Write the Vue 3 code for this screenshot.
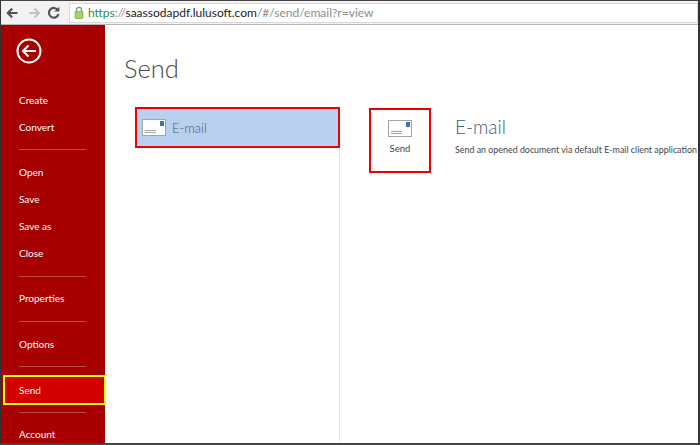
<script setup>
const groups = [
  ['Create', 'Convert'],
  ['Open', 'Save', 'Save as', 'Close'],
  ['Properties'],
  ['Options'],
  ['Send'],
  ['Account'],
]
</script>

<template>
  <div class="window">
    <header class="toolbar">
      <svg class="nav" width="70" height="22" viewBox="0 0 70 22" aria-hidden="true">
        <path d="M17 11H7M11.500 6.500 7 11l4.500 4.500" fill="none" stroke="#555" stroke-width="2.200"/>
        <path d="M29 11h10M34.500 6.500 39 11l-4.500 4.500" fill="none" stroke="#c4c4c4" stroke-width="2.200"/>
        <path d="M58.500 8a5 5 0 1 0 .7 4" fill="none" stroke="#555" stroke-width="2.200"/>
        <path d="M60 4.500v5h-5z" fill="#555"/>
      </svg>
      <div class="address">
        <svg class="lock" width="10" height="13" viewBox="0 0 10 13" aria-hidden="true">
          <path d="M2.500 6V3.800a2.500 2.500 0 0 1 5 0V6" fill="none" stroke="#8b8b8b" stroke-width="1.300"/>
          <rect x="1" y="5.500" width="8" height="7" rx="1" fill="#a5d468" stroke="#7fa84c" stroke-width=".8"/>
        </svg>
        <span class="url"><span class="scheme">https</span><span class="muted">://</span>saassodapdf.lulusoft.com<span class="muted">/#/send/email?r=view</span></span>
      </div>
    </header>

    <div class="app">
      <aside class="sidebar">
        <svg class="back" width="26" height="26" viewBox="0 0 26 26" aria-hidden="true">
          <circle cx="13" cy="13" r="11.500" fill="none" stroke="#fff" stroke-width="2"/>
          <path d="M20 13H7M12.500 7.500 7 13l5.500 5.500" fill="none" stroke="#fff" stroke-width="2"/>
        </svg>
        <nav class="menu">
          <div v-for="(group, i) in groups" :key="i" class="group">
            <a
              v-for="item in group"
              :key="item"
              class="item"
              :class="{ active: item === 'Send' }"
            >{{ item }}</a>
          </div>
        </nav>
      </aside>

      <main class="content">
        <h1 class="title">Send</h1>
        <div class="panes">
          <section class="list">
            <div class="list-item">
              <svg class="mail" width="24" height="17" viewBox="0 0 24 17" aria-hidden="true">
                <rect x=".5" y=".5" width="23" height="16" fill="#fff" stroke="#a3a3a3"/>
                <rect x="18" y="2" width="4" height="5" fill="#3f74ad"/>
                <path d="M3 11.500h11M3 13.500h11" stroke="#a3a3a3"/>
              </svg>
              <span>E-mail</span>
            </div>
          </section>
          <section class="detail">
            <button class="send-btn" type="button">
              <svg class="mail" width="24" height="17" viewBox="0 0 24 17" aria-hidden="true">
                <rect x=".5" y=".5" width="23" height="16" fill="#fff" stroke="#a3a3a3"/>
                <rect x="18" y="2" width="4" height="5" fill="#3f74ad"/>
                <path d="M3 11.500h11M3 13.500h11" stroke="#a3a3a3"/>
              </svg>
              <span>Send</span>
            </button>
            <div class="info">
              <h2>E-mail</h2>
              <p>Send an opened document via default E-mail client application</p>
            </div>
          </section>
        </div>
      </main>
    </div>
  </div>
</template>

<style>
html, body { margin: 0; background: #fff; overflow: hidden; }
</style>

<style scoped>
.window {
  box-sizing: border-box;
  width: 700px;
  height: 445px;
  display: flex;
  flex-direction: column;
  overflow: hidden;
  border-left: 1px solid #333;
  border-right: 2px solid #333;
  border-top: 1px solid #444;
  border-bottom: 2px solid #444;
  font-family: Lato, "Open Sans", sans-serif;
}
.toolbar {
  flex: none;
  height: 23px;
  display: flex;
  align-items: center;
  background: #f2f2f2;
  border-bottom: 1px solid #b5b5b5;
}
.nav { flex: none; width: 68px; }
.address {
  flex: 1;
  height: 20px;
  display: flex;
  align-items: center;
  gap: 4px;
  padding-left: 4px;
  background: #fff;
  border: 1px solid #d8d8d8;
  box-sizing: border-box;
}
.url {
  font-size: 12px;
  color: #222;
  white-space: nowrap;
}
.scheme { color: #2e8b3c; }
.muted { color: #8c8c8c; }
.app { flex: 1; display: flex; min-height: 0; }
.sidebar {
  flex: none;
  width: 104px;
  display: flex;
  flex-direction: column;
  background: #a80000;
  color: #fff;
}
.back { flex: none; margin: 13px 0 0 15px; }
.menu { margin-top: 22px; }
.group {
  padding: 9.200px 0;
  position: relative;
}
.group:first-child { padding-top: 0; }
.group + .group::before {
  content: "";
  position: absolute;
  top: 0;
  left: 18px;
  width: 67px;
  height: 1px;
  background: #c04a4a;
}
.item {
  box-sizing: border-box;
  display: flex;
  align-items: center;
  height: 27px;
  padding-left: 18px;
  font-size: 10px;
  color: #fff;
}
.item.active {
  height: 30px;
  margin: -1px -1px -2px 2px;
  padding-left: 14px;
  background: #d20000;
  border: 2px solid #ffff00;
}
.content {
  flex: 1;
  min-width: 0;
  display: flex;
  flex-direction: column;
}
.title {
  margin: 25px 0 0 19px;
  font-size: 25.500px;
  line-height: 36px;
  font-weight: 300;
  color: #4a4a4a;
}
.panes { flex: 1; display: flex; margin-top: 21px; min-height: 0; }
.list {
  flex: none;
  box-sizing: border-box;
  width: 235px;
  border-right: 1px solid #e6e6e6;
  padding-left: 30px;
}
.list-item {
  box-sizing: border-box;
  width: 205px;
  height: 41px;
  display: flex;
  align-items: center;
  gap: 6px;
  padding-left: 5px;
  background: #b9d0ef;
  border: 2px solid #f00000;
  font-size: 13px;
  font-weight: 300;
  color: #45586f;
}
.detail {
  flex: 1;
  display: flex;
  align-items: flex-start;
  padding: 1px 0 0 29px;
}
.send-btn {
  box-sizing: border-box;
  width: 62px;
  height: 65px;
  flex: none;
  display: flex;
  flex-direction: column;
  align-items: center;
  gap: 6px;
  padding: 10px 0 0;
  background: #fff;
  border: 2px solid #f00000;
  font: inherit;
  font-size: 9.500px;
  color: #444;
}
.info { margin-left: 24px; padding-top: 7px; }
.info h2 {
  margin: 0;
  font-size: 19px;
  line-height: 24px;
  font-weight: 300;
  color: #3f5a78;
}
.info p {
  margin: 4px 0 0;
  font-size: 8.900px;
  line-height: 14px;
  white-space: nowrap;
  color: #444;
}
</style>
